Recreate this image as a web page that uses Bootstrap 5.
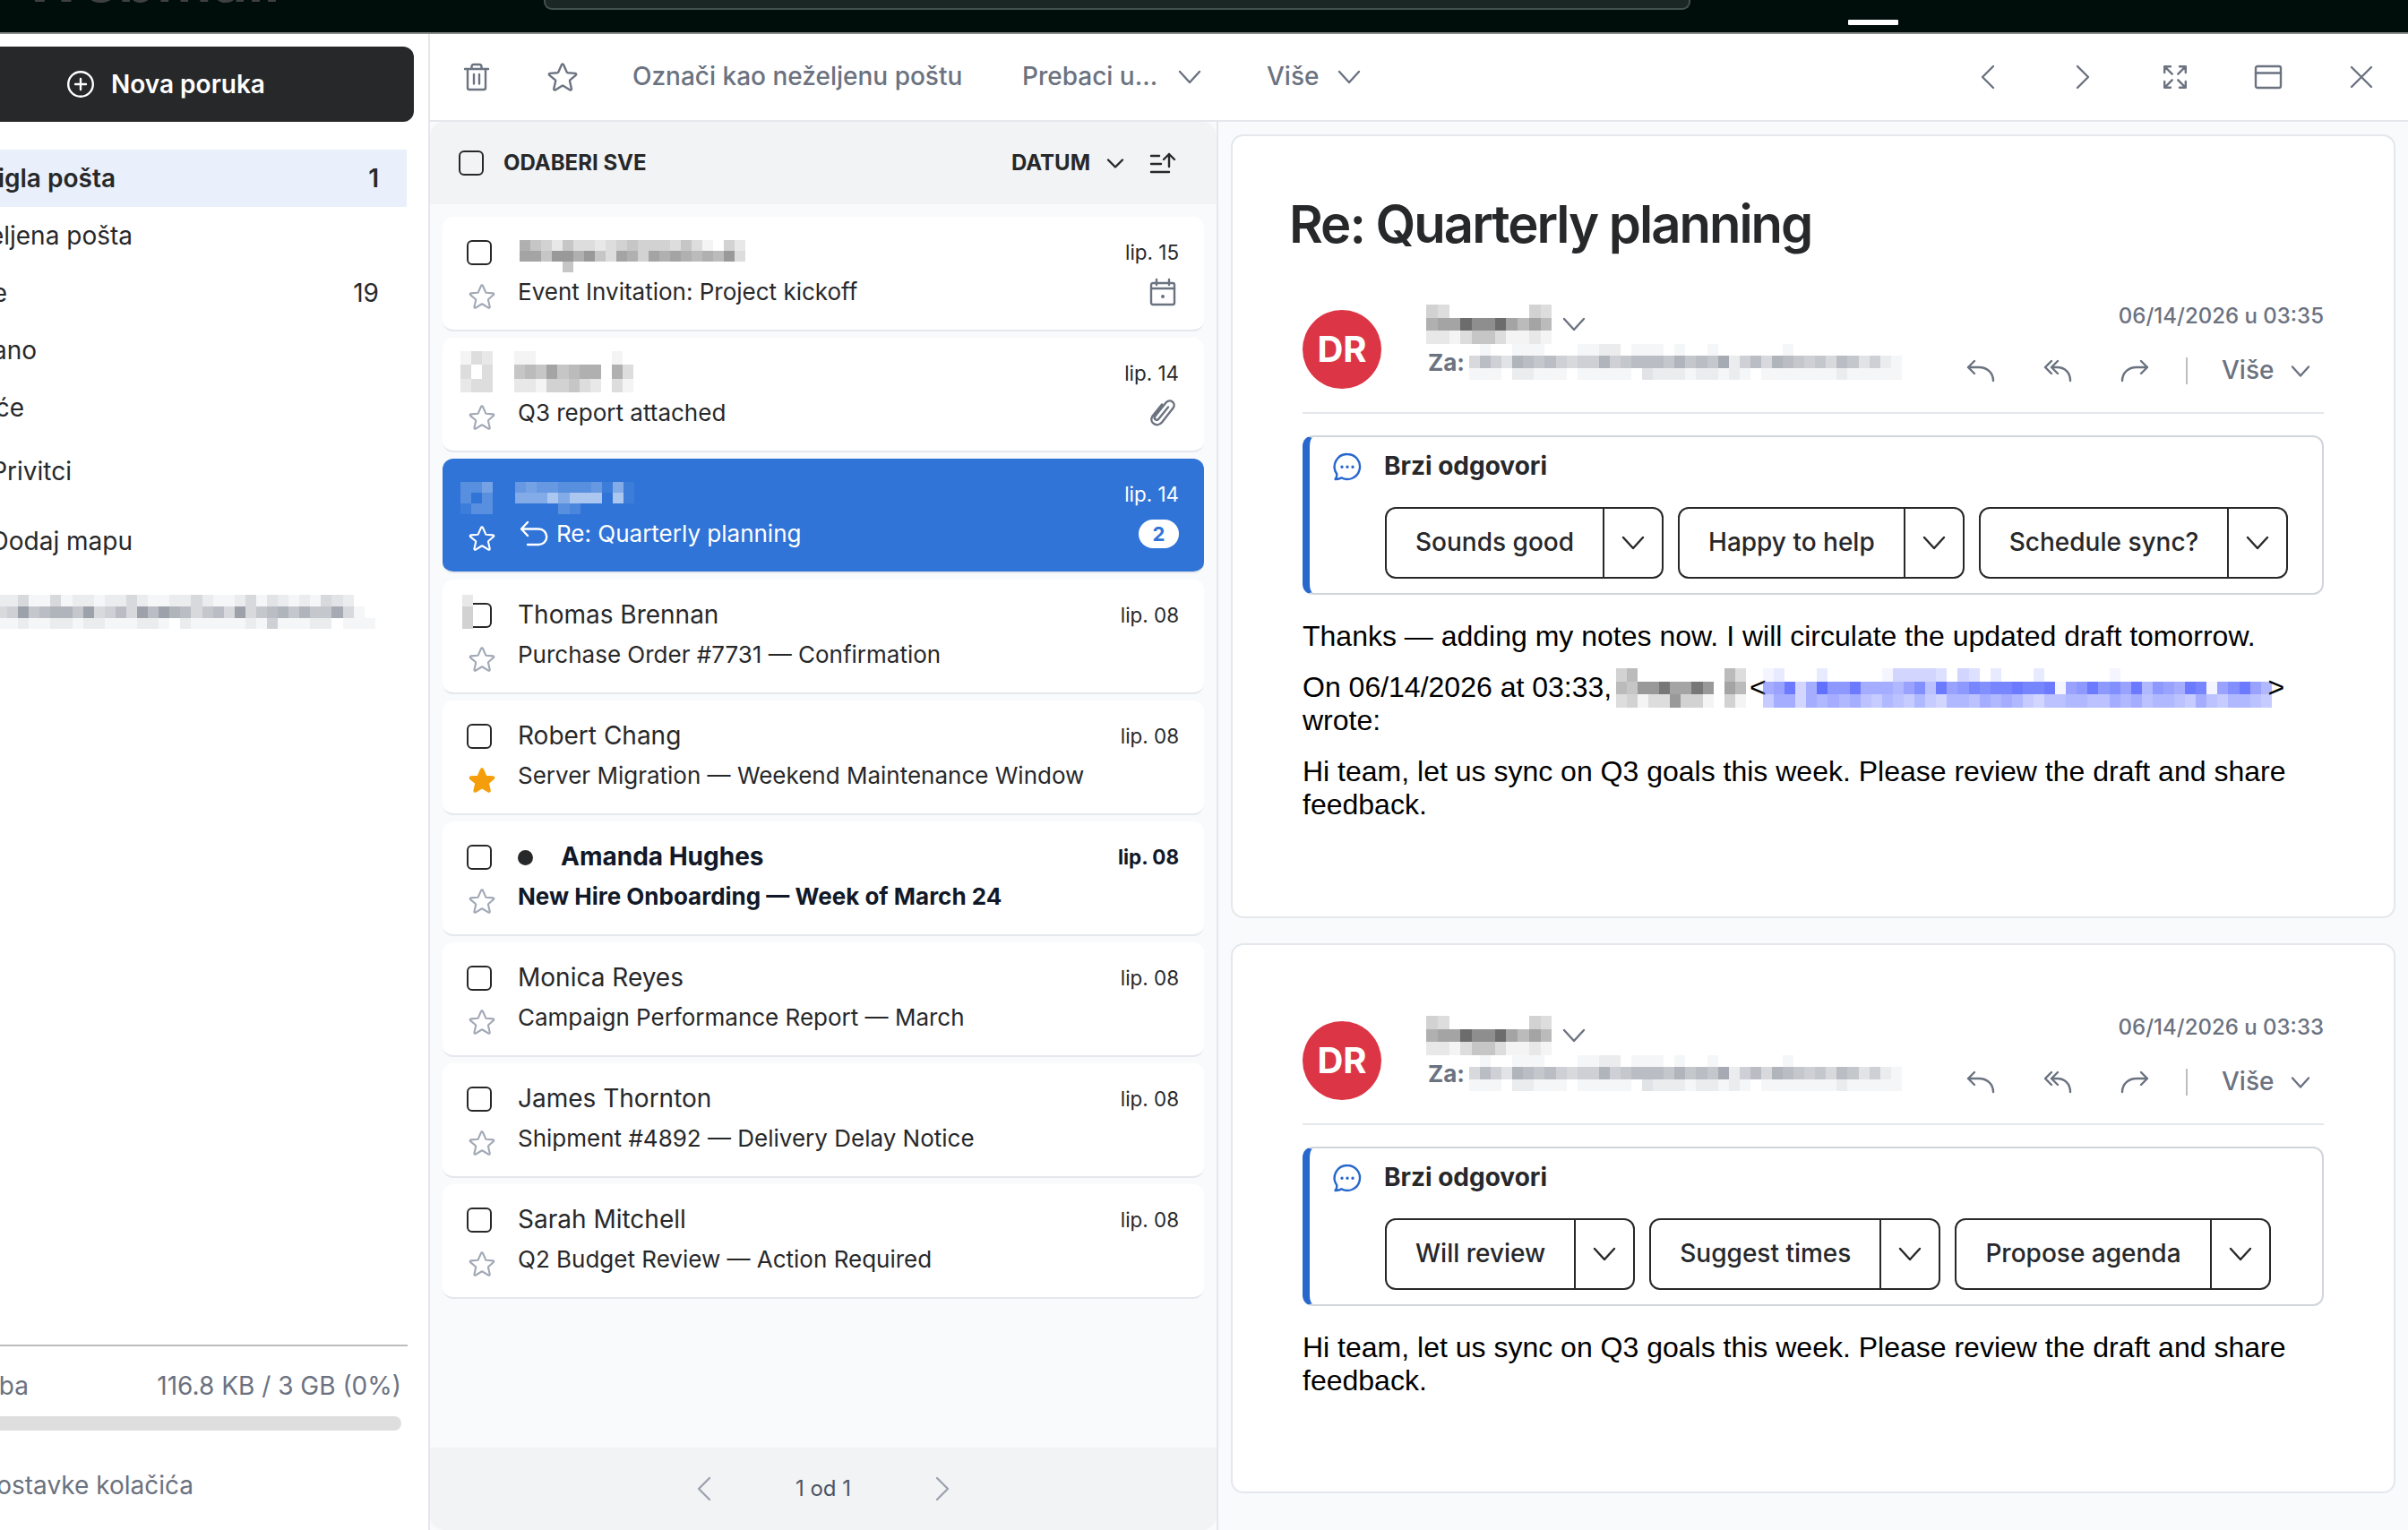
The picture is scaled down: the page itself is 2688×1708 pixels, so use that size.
<!DOCTYPE html>
<html lang="hr">
<head>
<meta charset="utf-8">
<meta name="viewport" content="width=device-width, initial-scale=1">
<title>Webmail</title>
<link href="https://cdn.jsdelivr.net/npm/bootstrap@5.3.0/dist/css/bootstrap.min.css" rel="stylesheet">
<style>
body{font-family:Inter,"Liberation Sans",sans-serif;font-size:28px;line-height:1.2;color:#27282a;background:#fff;width:2688px;height:1708px;overflow:hidden}
svg{display:block;flex:none;overflow:visible;fill:none;stroke:currentColor;stroke-width:2.4;stroke-linecap:round;stroke-linejoin:round}
.nw{white-space:nowrap}
.topbar{height:38px;background:#000e0b;border-bottom:2px solid #888b8a}
.brandmark{width:607px;height:36px;padding-left:24px;overflow:hidden}
.brandmark span{font-size:69px;font-weight:600;line-height:90px;color:#3f4141;margin-top:-68px}
.searchbox{width:1280px;height:11px;background:#1b2725;border:2px solid #44504e;border-top:0;border-radius:0 0 9px 9px}
.tabmark{width:56px;height:6px;margin:22px 0 0 176px;background:#fff;border-radius:1px}
.sidebar{width:480px;border-right:2px solid #e4e7ec}
.compose{width:462px;height:84px;margin-top:14px;background:#27282a;border-radius:0 12px 12px 0;color:#fff;font-weight:600;padding-left:75px;gap:19px}
.compose span{padding-top:1px}
.folders{margin-top:31px}
.folder{height:64px;width:454px;padding:2px 31px 0 0}
.folder.on{background:#e9f0fb;font-weight:600}
.cut{display:flex;justify-content:flex-end;white-space:nowrap}
.storage{border-top:2px solid #bbbdbe;width:455px;color:#6b7280}
.quota{height:16px;width:448px;background:#dedede;border-radius:0 8px 8px 0}
.toolbar-row{height:98px;border-bottom:2px solid #e4e7ec;color:#6b7280;font-weight:500;padding-left:38px}
.listcol{width:880px;background:#f9fafc;border-right:2px solid #e4e7ec}
.listhead{height:92px;background:#f2f3f5;border-radius:16px 16px 0 0;padding:0 46px 0 32px;font-size:24px;font-weight:650}
.listhead span{padding-top:1px}
.cb{width:28px;height:28px;border:2.5px solid #27282a;border-radius:6px;background:#fff;flex:none}
.listhead .cb{background:transparent}
.mail{width:850px;height:128px;margin:0 0 7px 14px;background:#fff;border-radius:12px;border-bottom:2px solid #e4e7ec;padding:18px 28px 0 27px}
.mail .r{height:44px}
.mail .lead-c{width:57px;flex:none}
.mail .r2 .lead-c{padding-left:1px}
.mail .r2 svg.star{margin-top:9px;margin-left:2px;color:#a1a8b5}
.mail .subj{font-size:26px}
.mail .when{font-size:22.4px}
.mail.sel{background:#3074d8;color:#fff}
.mail.sel .r2 svg.star{color:#fff}
.mail.unread{font-weight:650;color:#111827}
.unreaddot{width:17px;height:17px;border-radius:50%;background:#27282a;margin-right:31px}
.cnt{width:45px;height:32px;border-radius:16px;background:#fff;color:#3074d8;font-size:22px;font-weight:700}
.pager{height:92px;background:#f2f3f5;border-radius:0 0 16px 16px;font-size:24px;color:#4b5563}
.reader{background:#f9fafc;padding:14px 14px 0}
.msg{background:#fff;border:2px solid #e4e7ec;border-radius:14px;width:1300px;padding:0 78px}
.subject-line{height:170px;padding-top:28px;margin:0 0 0 -15px;font-size:58px;font-weight:600;letter-spacing:-2px}
.mhead{height:140px;border-bottom:2px solid #e4e7ec;color:#6b7280}
.avatar{width:88px;height:88px;margin-top:24px;border-radius:50%;background:#dc3545;color:#fff;font-size:40px;font-weight:650}
.quick{height:178px;margin-top:24px;border:2px solid #d1d5db;border-left:8px solid #2868cc;border-radius:12px;padding:14px 0 0 27px}
.qtitle{height:38px;font-weight:650}
.split{height:80px;border:2px solid #27282a;border-radius:12px;font-weight:500}
.split .lbl{padding:0 32px}
.split .arr{width:66px;border-left:2px solid #27282a}
.body-text{font-family:"Liberation Sans",Arial,sans-serif;font-size:32px;line-height:37px;color:#000;margin-top:28px}
.body-text p{margin:0 0 20px}
.mosaic{stroke:none}
.body-text .mosaic{display:inline-block;vertical-align:-4px;margin-top:-12px;margin-bottom:-8px}
</style>
<script src="https://cdn.jsdelivr.net/npm/bootstrap@5.3.0/dist/js/bootstrap.bundle.min.js"></script>
</head>
<body class="d-flex flex-column">
<svg width="0" height="0" class="position-absolute">
  <symbol id="i-star" viewBox="0 0 32 32" overflow="visible"><path d="M16 1.5c.5 0 .9.3 1.1.8l3.6 8.2c.2.4.5.6.9.7l8.6.7c1 .1 1.4 1.200.6 1.900l-6.500 5.600c-.3.3-.4.700-.3 1.100l2 8.700c.2 1-.8 1.700-1.700 1.200l-7.600-4.700c-.4-.2-.8-.2-1.200 0l-7.600 4.700c-.9.500-1.900-.2-1.700-1.200l2-8.700c.1-.4 0-.8-.3-1.100L1.200 13.800c-.8-.7-.4-1.800.6-1.900l8.600-.7c.4-.1.700-.3.900-.7l3.600-8.200c.2-.5.600-.8 1.100-.8Z"/></symbol>
  <symbol id="i-down" viewBox="0 0 24 14" overflow="visible"><path d="M1 1l11 12L23 1"/></symbol>
  <symbol id="i-left" viewBox="0 0 14 24" overflow="visible"><path d="M13 0L1 12l12 12"/></symbol>
  <symbol id="i-right" viewBox="0 0 14 24" overflow="visible"><path d="M1 0l12 12L1 24"/></symbol>
  <symbol id="i-reply" viewBox="0 0 30 22" overflow="visible"><path d="M8 0L1 7l7 7M1 7h12c9 0 16 6 16 15"/></symbol>
  <symbol id="i-replyall" viewBox="0 0 30 22" overflow="visible"><path d="M8 0L1 7l7 7M15 0L8 7l7 7M8 7h6c9 0 15 6 15 15"/></symbol>
  <symbol id="i-forward" viewBox="0 0 30 22" overflow="visible"><path d="M22 0l7 7-7 7M29 7H17C8 7 1 13 1 22"/></symbol>
  <symbol id="i-chat" viewBox="0 0 30 30" overflow="visible"><path d="M15 1a14 14 0 1 1-6.500 26.400c-2 1.200-4.500 1.800-7 1.600 1.500-1.600 2-3.800 1.700-6A14 14 0 0 1 15 1Z"/><path stroke-width="3.400" d="M9 15.200h.01M15 15.200h.01M21 15.200h.01"/></symbol>
</svg>

<header class="topbar d-flex align-items-start flex-shrink-0">
  <div class="brandmark d-flex align-items-start"><span>Webmail</span></div>
  <div class="searchbox"></div>
  <div class="tabmark"></div>
</header>

<div class="d-flex flex-grow-1">
  <aside class="sidebar d-flex flex-column flex-shrink-0">
    <div class="compose d-flex align-items-center nw">
      <svg width="30" height="30" viewBox="0 0 30 30"><circle cx="15" cy="15" r="13.800"/><path d="M15 9v12M9 15h12"/></svg>
      <span>Nova poruka</span>
    </div>
    <nav class="folders">
      <div class="folder on d-flex align-items-center justify-content-between"><span class="cut" style="width:129px">igla pošta</span><span>1</span></div>
      <div class="folder d-flex align-items-center"><span class="cut" style="width:148px">eljena pošta</span></div>
      <div class="folder d-flex align-items-center justify-content-between"><span class="cut" style="width:8px">e</span><span>19</span></div>
      <div class="folder d-flex align-items-center"><span class="cut" style="width:41px">ano</span></div>
      <div class="folder d-flex align-items-center"><span class="cut" style="width:27px">će</span></div>
      <div class="folder d-flex align-items-center" style="height:78px"><span class="cut" style="width:80px">Privitci</span></div>
      <div class="folder d-flex align-items-center" style="height:78px"><span class="cut" style="width:148px">Dodaj mapu</span></div>
    </nav>
    <svg class="mosaic" style="margin:21px 0 0 -4px" data-c="#6b7280" data-w="12.080" data-h="13,12.500,12.500" data-r="22411412212242112242112413212143200|45a67886a457 4a7a874674a4678686694 1|11211221221112210211111215111220111"></svg>
    <div class="storage mt-auto">
      <div class="d-flex align-items-center justify-content-between" style="height:78px;padding:11px 7px 0 0"><span class="cut" style="width:32px">ba</span><span class="nw">116.8 KB / 3 GB (0%)</span></div>
      <div class="quota"></div>
      <div class="d-flex align-items-center" style="height:111px;padding-top:12px"><span class="cut" style="width:216px">ostavke kolačića</span></div>
    </div>
  </aside>

  <main class="flex-grow-1 d-flex flex-column">
    <div class="toolbar-row d-flex align-items-center nw flex-shrink-0">
      <svg width="28" height="30" viewBox="0 0 28 30"><path d="M1 6h26M4 6v21q0 2 2 2h16q2 0 2-2V6M8.500 6V3.500Q8.500 1 11 1h6q2.500 0 2.500 2.500V6M11 12v10.500M17 12v10.500"/></svg>
      <svg width="32" height="32" style="margin-left:66px"><use href="#i-star"/></svg>
      <span style="width:435px;margin-left:62px">Označi kao neželjenu poštu</span>
      <span style="width:175px">Prebaci u...</span>
      <svg width="24" height="14"><use href="#i-down"/></svg>
      <span style="width:80px;margin-left:74px">Više</span>
      <svg width="24" height="14"><use href="#i-down"/></svg>
      <div class="d-flex align-items-center ms-auto" style="padding-right:40px">
        <svg width="14" height="24"><use href="#i-left"/></svg>
        <svg width="14" height="24" style="margin-left:92px"><use href="#i-right"/></svg>
        <svg width="26" height="26" viewBox="0 0 26 26" style="margin-left:83px"><path d="M1.200 8V1.200H8M1.200 1.200l8.500 8.500M18 1.200h6.800V8M24.800 1.200l-8.500 8.500M1.200 18v6.800H8M1.200 24.800l8.500-8.500M18 24.800h6.800V18M24.800 24.800l-8.500-8.500"/></svg>
        <svg width="30" height="26" viewBox="0 0 30 26" style="margin-left:76px"><rect x="1" y="1" width="28" height="24" rx="2"/><path d="M1 8.500h28"/></svg>
        <svg width="24" height="22" viewBox="0 0 24 22" style="margin-left:77px"><path d="M1 0l22 22M23 0L1 22"/></svg>
      </div>
    </div>

    <div class="d-flex flex-grow-1">
      <section class="listcol d-flex flex-column flex-shrink-0">
        <div class="listhead d-flex align-items-center nw">
          <span class="cb"></span><span style="margin-left:22px">ODABERI SVE</span>
          <span class="ms-auto">DATUM</span>
          <svg width="16" height="9" viewBox="0 0 16 9" style="margin-left:20px"><path d="M0 .5L8 8.500 16 .5"/></svg>
          <svg width="28" height="22" viewBox="0 0 28 22" style="margin-left:31px"><path d="M1 3h9M1 12h11M1 21h20M21 15V1M15 7l6-6 6 6"/></svg>
        </div>
        <div id="mails" style="padding-top:14px"></div>
        <div class="pager mt-auto d-flex align-items-center justify-content-center">
          <svg width="14" height="24" style="color:#9ca3af"><use href="#i-left"/></svg>
          <span class="text-center" style="width:252px">1 od 1</span>
          <svg width="14" height="24" style="color:#9ca3af"><use href="#i-right"/></svg>
        </div>
      </section>

      <section class="reader flex-grow-1" id="reader"></section>
    </div>
  </main>
</div>

<script>
// Redacted text: each character is the opacity (0-f) of one mosaic cell.
const mosaic = (rows, w, h, color, attrs = '') =>
  `<svg class="mosaic" data-c="${color}" data-w="${w}" data-h="${h}" data-r="${rows}" ${attrs}></svg>`;

const star = f => `<svg class="star" width="28" height="28"${f ? ' style="color:#f59e0b;fill:#f59e0b"' : ''}><use href="#i-star"/></svg>`;
const cal = '<svg width="28" height="29" viewBox="0 0 28 29" style="color:#6b7280"><rect x="1" y="4" width="26" height="24" rx="2"/><path d="M1 10h26M7 0v6M21 0v6"/><path stroke-width="4" d="M14 19h.01"/></svg>';
const clip = '<svg width="28" height="30" viewBox="0 0 28 30" style="color:#6b7280"><path d="M20 8.500L9.500 21.500c-2.500 3-6.300 0-4-3L17.500 3.500c4.500-5 12 .5 8 6L13 25.500c-5.500 6.500-15 0-10.500-7L13 5.500"/></svg>';
const mails = [
  {s: mosaic('754253323454443531042|885997953874878767693|000050000000000000000', 12, '12,12,12', '#555', 'style="margin:8px 0 0 2px"'), t: 'Event Invitation: Project kickoff', d: 'lip. 15', x: cal},
  {c: mosaic('132|303|233', 12, '15,16,15', '#555', 'style="margin:-4px 0 0 -7px"'), s: mosaic('11000000010|56585677073|22144532031', 12.1, '15,16,15', '#555', 'style="margin:-4px 0 0 -4px"'), t: 'Q3 report attached', d: 'lip. 14', x: clip},
  {c: mosaic('335|303|133', 12, '12,12,12', '#fff', 'style="margin:8px 0 0 -7px"'), s: mosaic('45443334161|66696999091|00003200000', 12.1, '12,12,12', '#fff', 'style="margin:8px 0 0 -3px"'), t: 'Re: Quarterly planning', d: 'lip. 14', x: '<span class="cnt d-flex align-items-center justify-content-center">2</span>', k: 'sel',
   p: '<svg width="30" height="26" viewBox="0 0 30 26" style="margin:0 10px 0 3px"><path d="M8 0L1 7.500 8 15M1 7.500h19.500a8.700 8.700 0 0 1 0 17.500H8"/></svg>'},
  {c: '<span class="cb" style="border-left:0;border-radius:0 6px 6px 0;width:21px;margin-left:7px"></span><span style="margin:-8px 0 0 -33px">' + mosaic('2|4|4', 12, '13,12,13', '#555') + '</span>', s: 'Thomas Brennan', t: 'Purchase Order #7731 — Confirmation', d: 'lip. 08'},
  {s: 'Robert Chang', t: 'Server Migration — Weekend Maintenance Window', d: 'lip. 08', f: 1},
  {s: '<span class="unreaddot"></span>Amanda Hughes', t: 'New Hire Onboarding — Week of March 24', d: 'lip. 08', k: 'unread'},
  {s: 'Monica Reyes', t: 'Campaign Performance Report — March', d: 'lip. 08'},
  {s: 'James Thornton', t: 'Shipment #4892 — Delivery Delay Notice', d: 'lip. 08'},
  {s: 'Sarah Mitchell', t: 'Q2 Budget Review — Action Required', d: 'lip. 08'}
];
document.getElementById('mails').innerHTML = mails.map(m => `
  <article class="mail nw ${m.k || ''}">
    <div class="r d-flex align-items-center"><div class="lead-c d-flex align-items-center">${m.c || '<span class="cb"></span>'}</div><div class="d-flex align-items-center">${m.s}</div><span class="when ms-auto">${m.d}</span></div>
    <div class="r r2 d-flex align-items-center"><div class="lead-c">${star(m.f)}</div><div class="subj d-flex align-items-center">${m.p || ''}${m.t}</div><div class="ms-auto" style="margin-right:${m.k === 'sel' ? 0 : 4}px">${m.x || ''}</div></div>
  </article>`).join('');

const ic = (n, st = '') => `<svg width="30" height="22" style="${st}"><use href="#i-${n}"/></svg>`;
const head = time => `
  <div class="mhead d-flex align-items-start nw">
    <div class="avatar d-flex align-items-center justify-content-center">DR</div>
    <div style="margin:18px 0 0 50px">
      <div class="d-flex align-items-center">${mosaic('43000000043|788daad8686|22135531121', 12.75, '15,14,15', '#555')}<svg width="24" height="14" style="margin-left:13px"><use href="#i-down"/></svg></div>
      <div class="d-flex align-items-center" style="height:40px;font-size:26px;font-weight:650;padding-left:2px"><span style="width:46px;padding-top:1px">Za:</span>${mosaic('0100111000112201110100100000010000000000|4753876754558567776867692574876564763521|1110221110111110322212212101111111211111', 12.07, '13,14,13', '#6b7280')}</div>
    </div>
    <div class="ms-auto" style="margin-top:9px;font-weight:500">
      <div class="d-flex align-items-center justify-content-end" style="height:44px;font-size:24px">${time}</div>
      <div class="d-flex align-items-center justify-content-end" style="height:44px;margin-top:17px;padding-right:16px">
        ${ic('reply')}${ic('replyall', 'margin-left:56px')}${ic('forward', 'margin-left:56px')}
        <span style="width:2px;height:30px;background:#bbbdbe;margin-left:42px"></span>
        <span style="margin-left:38px;width:78px;">Više</span><svg width="20" height="11" viewBox="0 0 20 11"><path d="M1 .5l9 10 9-10"/></svg>
      </div>
    </div>
  </div>`;
const quick = opts => `
  <div class="quick">
    <div class="qtitle d-flex align-items-center"><svg width="30" height="30" style="color:#2868cc;margin-right:26px"><use href="#i-chat"/></svg>Brzi odgovori</div>
    <div class="d-flex nw" style="margin:26px 0 0 57px;gap:16px">
      ${opts.map(o => `<div class="split d-flex"><span class="lbl d-flex align-items-center">${o}</span><span class="arr d-flex align-items-center justify-content-center"><svg width="24" height="14"><use href="#i-down"/></svg></span></div>`).join('')}
    </div>
  </div>`;
const hi = '<p>Hi team, let us sync on Q3 goals this week. Please review the draft and share feedback.</p>';
document.getElementById('reader').innerHTML = `
  <article class="msg" style="height:875px">
    <h1 class="subject-line d-flex align-items-center nw">Re: Quarterly planning</h1>
    ${head('06/14/2026 u 03:35')}${quick(['Sounds good', 'Happy to help', 'Schedule sync?'])}
    <div class="body-text"><p>Thanks — adding my notes now. I will circulate the updated draft tomorrow.</p>
    <p>On 06/14/2026 at 03:33,${mosaic('460000000063|6599c88c9086|341339441041', 12.07, '15,14,15', '#555', 'style="margin-left:5px;margin-right:4px"')}&lt;${mosaic('12000200000144443043020002000000100000000000000|89d48eaad88879b6d9acbccdccd19adab9d7a98dc19bd97|58848787865765754776878754667766878677658657765', 12.08, '15,14,15', '#5566ff', 'style="margin-left:-4px;margin-right:-4px"')}&gt; wrote:</p>${hi}</div>
  </article>
  <article class="msg" style="height:614px;margin-top:28px;padding-top:61px">
    ${head('06/14/2026 u 03:33')}${quick(['Will review', 'Suggest times', 'Propose agenda'])}
    <div class="body-text">${hi}</div>
  </article>`;

document.querySelectorAll('svg.mosaic').forEach(el => {
  const hs = el.dataset.h.split(',').map(Number), w = +el.dataset.w;
  const rows = el.dataset.r.replace(/ /g, '').split('|');
  let y = 0, out = '';
  rows.forEach((r, j) => {
    [...r].forEach((ch, i) => {
      const a = parseInt(ch, 16) / 15;
      if (a) out += `<rect x="${i * w}" y="${y}" width="${w}" height="${hs[j]}" fill="${el.dataset.c}" fill-opacity="${a.toFixed(3)}" shape-rendering="crispEdges"/>`;
    });
    y += hs[j];
  });
  el.setAttribute('width', rows[0].length * w);
  el.setAttribute('height', y);
  el.innerHTML = out;
});
</script>
</body>
</html>
